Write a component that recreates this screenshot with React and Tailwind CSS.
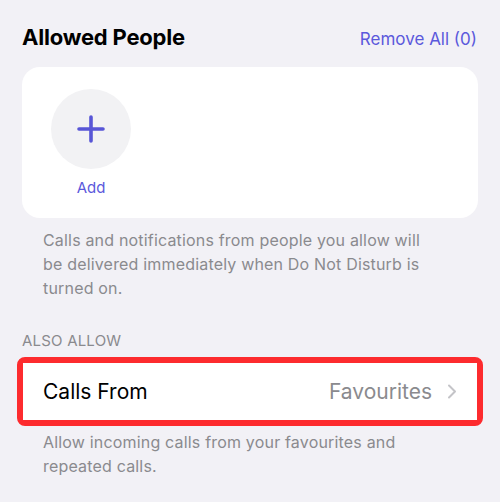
const FONT = { fontFamily: 'Inter, "Noto Sans", sans-serif' }

function PlusIcon() {
  return (
    <svg width="28" height="28" viewBox="0 0 28 28" fill="none" stroke="#5856d6" strokeWidth="3.6" strokeLinecap="round">
      <path d="M14 2v24M2 14h24" />
    </svg>
  )
}

function Chevron() {
  return (
    <svg width="10" height="15" viewBox="0 0 10 15" fill="none" stroke="#c4c4c8" strokeWidth="2" strokeLinecap="round" strokeLinejoin="round">
      <path d="M2 1.5l6 6-6 6" />
    </svg>
  )
}

export default function App() {
  return (
    <div className="w-[500px] h-[502px] overflow-hidden bg-[#f2f1f6] px-[22px] pt-[23px]" style={FONT}>
      {/* header */}
      <div className="flex items-baseline justify-between">
        <h1 className="text-[22px] leading-[28px] font-bold text-black tracking-[-0.2px]">Allowed People</h1>
        <button className="text-[17px] leading-[22px] text-[#5b59dc] pr-[1px]">Remove All (0)</button>
      </div>

      {/* people card */}
      <div className="mt-[16px] h-[151px] rounded-[18px] bg-white pt-[22px] pl-[29px]">
        <div className="flex w-[80px] flex-col items-center">
          <div className="flex h-[80px] w-[80px] items-center justify-center rounded-full bg-[#f2f2f4]">
            <PlusIcon />
          </div>
          <span className="mt-[9px] text-[15px] leading-[20px] text-[#5b59dc]">Add</span>
        </div>
      </div>

      <p className="mt-[10px] w-[421px] pl-[21px] text-[16px] leading-[24px] tracking-[0.18px] text-[#8a8a8e]">
        Calls and notifications from people you allow will be delivered immediately when Do Not Disturb is turned on.
      </p>

      <div className="mt-[31px] text-[15px] leading-[20px] text-[#8a8a8e] tracking-[0.2px]">ALSO ALLOW</div>

      {/* highlighted row */}
      <div className="-mx-[5px] mt-[6px] rounded-[8px] border-[6px] border-[#fd2b2e]">
        <div className="flex h-[57px] items-center justify-between bg-white pl-[20px] pr-[20px]">
          <span className="text-[21px] leading-[28px] text-black">Calls From</span>
          <div className="flex items-center gap-[15px]">
            <span className="text-[21px] leading-[28px] text-[#8a8a8e]">Favourites</span>
            <Chevron />
          </div>
        </div>
      </div>

      <p className="mt-[4px] px-[21px] text-[16px] leading-[24px] tracking-[0.18px] text-[#8a8a8e]">
        Allow incoming calls from your favourites and repeated calls.
      </p>
    </div>
  )
}
